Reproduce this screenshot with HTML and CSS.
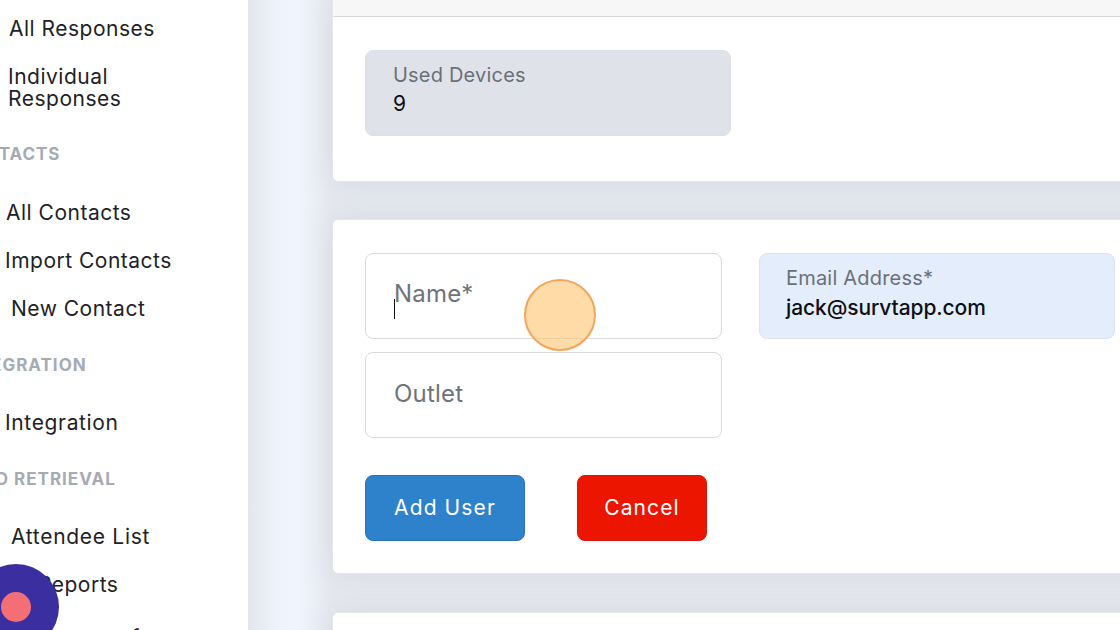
FILE: index.html
```html
<!DOCTYPE html>
<html lang="en">
<head>
<meta charset="utf-8">
<title>Add User</title>
<link rel="stylesheet" href="styles.css">
</head>
<body>
<div class="app">
  <aside class="sidebar">
    <a class="item i-responses">All Responses</a>
    <a class="item i-individual">Individual<br>Responses</a>
    <h4 class="heading h-contacts">CONTACTS</h4>
    <a class="item i-all">All Contacts</a>
    <a class="item i-import">Import Contacts</a>
    <a class="item i-new">New Contact</a>
    <h4 class="heading h-integration">INTEGRATION</h4>
    <a class="item i-integration">Integration</a>
    <h4 class="heading h-retrieval">ID RETRIEVAL</h4>
    <a class="item i-attendee">Attendee List</a>
    <a class="item i-reports">Reports</a>
    <a class="item i-last">Summary of</a>
  </aside>
  <main class="main">
    <section class="card card-devices">
      <div class="card-top"></div>
      <div class="card-body">
        <div class="field field-disabled">
          <span class="field-label">Used Devices</span>
          <span class="field-value value-small">9</span>
        </div>
      </div>
    </section>
    <section class="card card-form">
      <div class="form-grid">
        <div class="form-col">
          <div class="field field-input">
            <span class="placeholder placeholder-raised">Name*</span>
            <span class="caret"></span>
          </div>
          <div class="field field-input">
            <span class="placeholder">Outlet</span>
          </div>
        </div>
        <div class="field field-filled">
          <span class="field-label">Email Address*</span>
          <span class="field-value">jack@survtapp.com</span>
        </div>
      </div>
      <div class="actions">
        <button class="btn btn-primary">Add User</button>
        <button class="btn btn-danger">Cancel</button>
      </div>
    </section>
    <section class="card card-next"></section>
  </main>
</div>
<div class="click-marker"></div>
<div class="launcher"><span class="launcher-dot"></span></div>
</body>
</html>
```
FILE: styles.css
```css
* { box-sizing: border-box; }
html, body { margin: 0; height: 100%; overflow: hidden; }
body {
  font-family: "Inter", "Liberation Sans", sans-serif;
  color: #1c2024;
  background: #fff;
}
.app { display: flex; width: 1120px; height: 630px; overflow: hidden; }

.sidebar {
  flex: 0 0 248px;
  height: 630px;
  background: #fff;
  overflow: hidden;
  display: flex;
  flex-direction: column;
  align-items: flex-start;
  white-space: nowrap;
  padding-top: 18px;
}
.item { display: block; font-size: 21px; line-height: 22px; color: #1e2226; letter-spacing: 0.5px; }
.heading { margin: 0; font-size: 17px; line-height: 20px; font-weight: 700; color: #a5abb3; letter-spacing: 1px; }

.i-responses { margin-left: 9px; }
.i-individual { margin: 26px 0 0 8px; }
.h-contacts { margin: 34px 0 0 -43px; }
.i-all { margin: 38px 0 0 6px; }
.i-import { margin: 26px 0 0 5px; }
.i-new { margin: 26px 0 0 11px; }
.h-integration { margin: 35px 0 0 -41px; }
.i-integration { margin: 37px 0 0 5px; letter-spacing: 0.65px; }
.h-retrieval { margin: 35px 0 0 -10px; }
.i-attendee { margin: 37px 0 0 11px; letter-spacing: 0.7px; }
.i-reports { margin: 26px 0 0 38px; }
.i-last { margin: 31px 0 0 14px; }

.main {
  flex: 1 1 auto;
  min-width: 0;
  padding: 0 0 0 84px;
  background: linear-gradient(90deg, #e3e6ed 0, #eef2fa 28px, #f0f4fc 50px, #e5e8ee 84px);
}
.card {
  width: 860px;
  background: #fff;
  border-radius: 6px 0 0 6px;
  box-shadow: 0 0 26px rgba(165, 170, 185, 0.24);
  border: 1px solid #e4e6ea;
  border-right: 0;
}
.card-devices { height: 182px; border-top: 0; border-radius: 0 0 0 6px; }
.card-top { height: 17px; background: #f7f7f7; border-bottom: 1px solid #d6d6d8; }
.card-body { padding: 33px 32px; }
.card-form { height: 355px; margin-top: 37px; padding: 33px 32px; }
.card-next { height: 60px; margin-top: 38px; }

.field { border-radius: 8px; font-size: 21px; }
.field-disabled, .field-filled, .field-input { height: 86px; }
.field-disabled {
  width: 366px;
  background: #dfe3e9;
  border: 1px solid #dde1e7;
  padding: 13px 27px;
  display: flex;
  flex-direction: column;
}
.field-label { font-size: 20px; line-height: 22px; color: #6a7078; letter-spacing: 0.2px; }
.field-value { font-size: 21px; line-height: 26px; color: #0d0f12; margin-top: 6px; font-weight: 500; }
.value-small { margin-top: 5px; font-weight: 400; }

.form-grid { display: flex; gap: 37px; align-items: flex-start; }
.form-col { display: flex; flex-direction: column; gap: 13px; width: 357px; }
.field-input {
  background: #fff;
  border: 1px solid #d9dadc;
  padding: 27px 28px;
  position: relative;
  color: #6f7379;
}
.placeholder { display: block; font-size: 24px; line-height: 28px; color: #6f7379; letter-spacing: 0.2px; }
.placeholder-raised { margin-top: -1px; }
.caret { position: absolute; left: 28px; top: 45px; width: 1px; height: 20px; background: #111; }
.field-filled {
  width: 356px;
  background: #e4edfc;
  border: 1px solid #dde3ed;
  padding: 13px 26px;
  display: flex;
  flex-direction: column;
}
.field-filled .field-value { margin-top: 6px; letter-spacing: -0.1px; }

.actions { display: flex; gap: 52px; margin-top: 37px; }
.btn {
  height: 66px;
  border-radius: 8px;
  border: 1px solid transparent;
  color: #fff;
  font: inherit;
  font-size: 21px;
  font-weight: 400;
  letter-spacing: 1.1px;
  padding: 0 0 2px;
}
.btn-primary { width: 160px; background: #2e82cb; border-color: #2a74b4; }
.btn-danger { width: 130px; background: #ec1500; border-color: #d41a0a; }

.click-marker {
  position: absolute;
  left: 524px;
  top: 279px;
  width: 72px;
  height: 72px;
  border-radius: 50%;
  background: rgba(253, 200, 120, 0.65);
  border: 2px solid #f4a55c;
}
.launcher {
  position: absolute;
  left: -27px;
  top: 564px;
  width: 86px;
  height: 86px;
  border-radius: 50%;
  background: #3a2ea0;
  display: flex;
  align-items: center;
  justify-content: center;
}
.launcher-dot { width: 30px; height: 30px; border-radius: 50%; background: #f36f75; }
```
